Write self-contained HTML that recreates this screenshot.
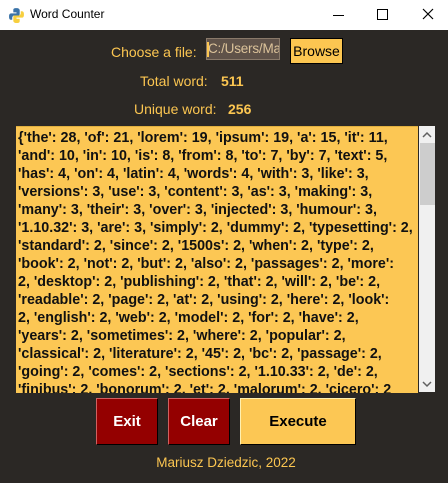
<!DOCTYPE html>
<html><head><style>
body{margin:0;width:448px;height:483px;background:#2b2825;font-family:"Liberation Sans",sans-serif;position:relative;overflow:hidden}
.tb{position:absolute;left:0;top:0;width:448px;height:30px;background:#fff}
.a{position:absolute;white-space:nowrap}
.lbl{color:#fcc651;font-size:14px}
.box{position:absolute;left:16px;top:126px;width:402px;height:266px;background:#fcc754;overflow:hidden;border-top:1px solid #e0b040}
.box div{font-weight:bold;font-size:14.3px;line-height:18px;color:#111;padding:2px 0 0 2px;white-space:nowrap}
.btn{position:absolute;top:398px;height:47px;box-sizing:border-box;display:flex;align-items:center;justify-content:center;font-weight:bold;font-size:15px}
</style></head><body>
<div class="tb">
<svg class="a" style="left:8px;top:7px" width="17" height="17" viewBox="0 0 16 16"><path d="M8 1c-3 0-3 1-3 2v2h3v1H3C1 6 1 8 1 9s0 3 2 3h1v-2c0-1 1-2 2-2h4c1 0 1-1 1-2V3c0-1-1-2-3-2z" fill="#3a73a8"/><path d="M8 15c3 0 3-1 3-2v-2H8v-1h5c2 0 2-2 2-3s0-3-2-3h-1v2c0 1-1 2-2 2H6c-1 0-1 1-1 2v3c0 1 1 2 3 2z" fill="#f7cf3e"/></svg>
<div class="a" style="left:30px;top:7px;font-size:12px;color:#000">Word Counter</div>
<div class="a" style="left:333px;top:15px;width:11px;height:1px;background:#000"></div>
<div class="a" style="left:377px;top:9px;width:9px;height:9px;border:1px solid #000"></div>
<svg class="a" style="left:422px;top:8px" width="12" height="12"><path d="M1 1L11 11M11 1L1 11" stroke="#000" stroke-width="1.2"/></svg>
</div>
<div class="a lbl" style="left:111px;top:44px">Choose a file:</div>
<div class="a" style="left:206px;top:38px;width:74px;height:22px;background:#5f5249;border:1px solid #8a7a6a;box-sizing:border-box;overflow:hidden;color:#dcc39a;font-size:13.5px;line-height:20px;padding-left:1px;letter-spacing:-0.2px">C:/Users/Ma</div>
<div class="a" style="left:207px;top:42px;width:2px;height:15px;background:#fcc651"></div>
<div class="a" style="left:290px;top:38px;width:53px;height:26px;background:#fcc651;border:1px solid #000;box-sizing:border-box;font-size:14px;line-height:24px;text-align:center;color:#000">Browse</div>
<div class="a lbl" style="left:140px;top:73px">Total word:</div>
<div class="a lbl" style="left:221px;top:73px;font-weight:bold">511</div>
<div class="a lbl" style="left:134px;top:101px">Unique word:</div>
<div class="a lbl" style="left:228px;top:101px;font-weight:bold">256</div>
<div class="box"><div>{'the': 28, 'of': 21, 'lorem': 19, 'ipsum': 19, 'a': 15, 'it': 11,<br>'and': 10, 'in': 10, 'is': 8, 'from': 8, 'to': 7, 'by': 7, 'text': 5,<br>'has': 4, 'on': 4, 'latin': 4, 'words': 4, 'with': 3, 'like': 3,<br>'versions': 3, 'use': 3, 'content': 3, 'as': 3, 'making': 3,<br>'many': 3, 'their': 3, 'over': 3, 'injected': 3, 'humour': 3,<br>'1.10.32': 3, 'are': 3, 'simply': 2, 'dummy': 2, 'typesetting': 2,<br>'standard': 2, 'since': 2, '1500s': 2, 'when': 2, 'type': 2,<br>'book': 2, 'not': 2, 'but': 2, 'also': 2, 'passages': 2, 'more':<br>2, 'desktop': 2, 'publishing': 2, 'that': 2, 'will': 2, 'be': 2,<br>'readable': 2, 'page': 2, 'at': 2, 'using': 2, 'here': 2, 'look':<br>2, 'english': 2, 'web': 2, 'model': 2, 'for': 2, 'have': 2,<br>'years': 2, 'sometimes': 2, 'where': 2, 'popular': 2,<br>'classical': 2, 'literature': 2, '45': 2, 'bc': 2, 'passage': 2,<br>'going': 2, 'comes': 2, 'sections': 2, '1.10.33': 2, 'de': 2,<br>'finibus': 2, 'bonorum': 2, 'et': 2, 'malorum': 2, 'cicero': 2</div></div>
<div class="a" style="left:419px;top:126px;width:16px;height:266px;background:#f0f0f0"></div>
<div class="a" style="left:420px;top:143px;width:15px;height:62px;background:#cdcdcd"></div>
<svg class="a" style="left:422px;top:131px" width="10" height="8"><path d="M1 6L5 2L9 6" stroke="#606060" stroke-width="1.5" fill="none"/></svg>
<svg class="a" style="left:422px;top:380px" width="10" height="8"><path d="M1 2L5 6L9 2" stroke="#606060" stroke-width="1.5" fill="none"/></svg>
<div class="btn" style="left:96px;width:62px;background:#940000;border:1px solid #d06060;border-right-color:#000;border-bottom-color:#000;color:#fff">Exit</div>
<div class="btn" style="left:168px;width:62px;background:#940000;border:1px solid #d06060;border-right-color:#000;border-bottom-color:#000;color:#fff">Clear</div>
<div class="btn" style="left:240px;width:116px;background:#fcc754;border:1px solid #fff0b0;border-right-color:#000;border-bottom-color:#000;color:#000">Execute</div>
<div class="a lbl" style="left:0;width:452px;text-align:center;top:455px;font-size:13.5px">Mariusz Dziedzic, 2022</div>
</body></html>
